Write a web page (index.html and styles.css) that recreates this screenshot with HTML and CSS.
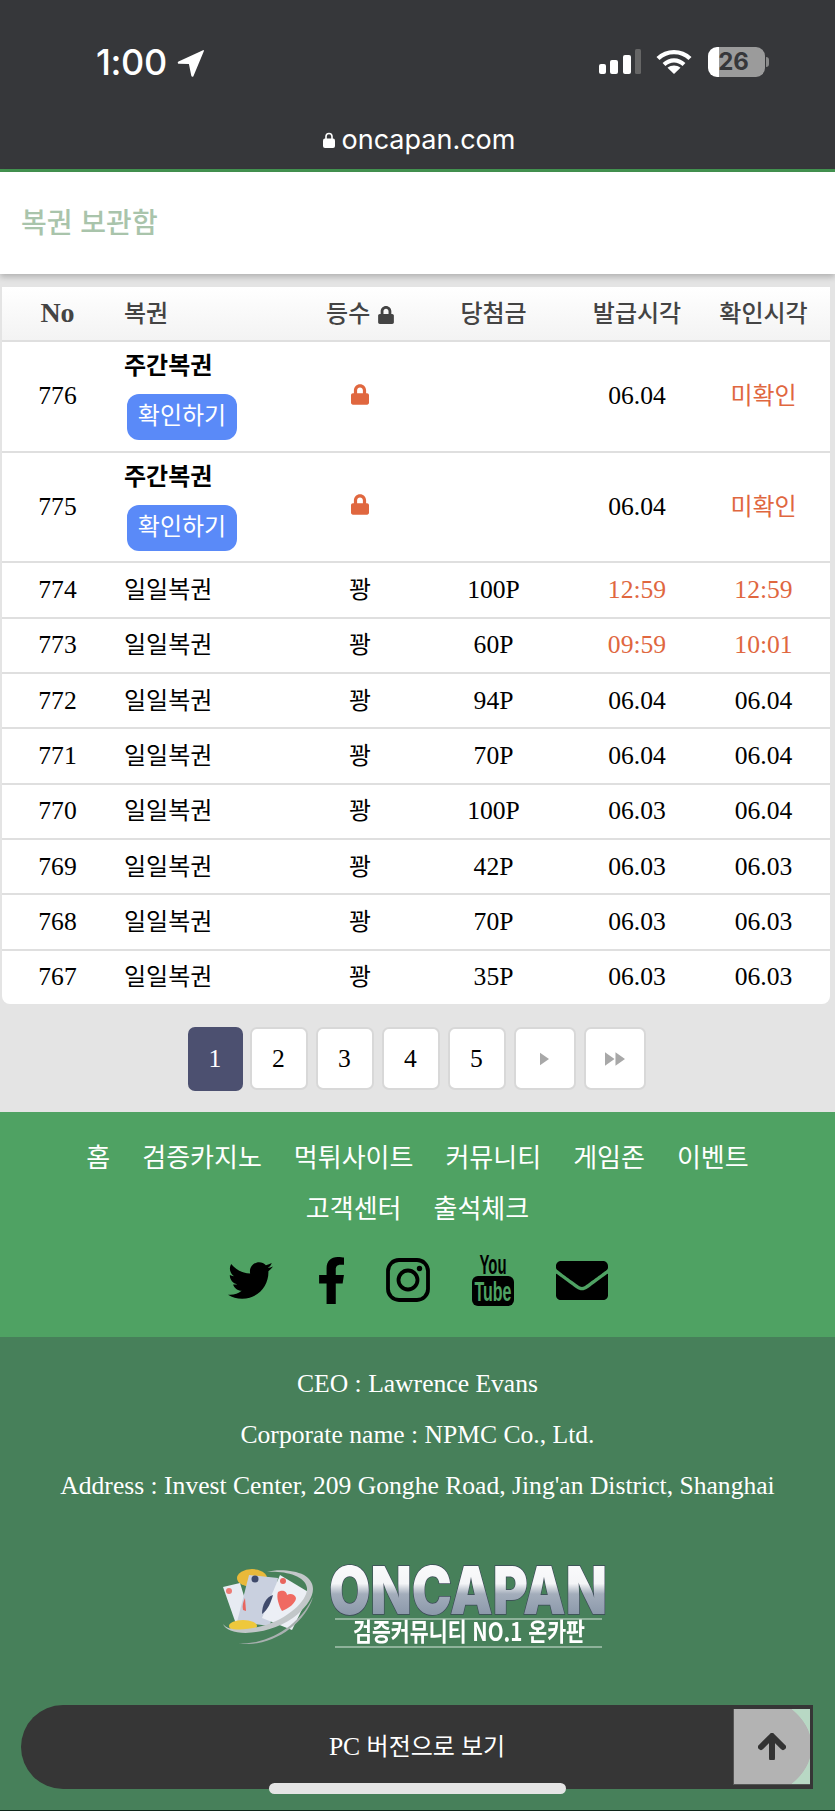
FILE: index.html
```html
<!DOCTYPE html>
<html lang="ko">
<head>
<meta charset="utf-8">
<title>복권 보관함</title>
<link rel="stylesheet" href="styles.css">
</head>
<body>
<div class="page">
  <header class="phone">
    <div class="status">
      <div class="clock"><span>1:00</span>
        <svg class="loc" viewBox="0 0 27 28"><path d="M26 1.200 1.500 12.600c-1.200.6-.9 2 .4 2.100l10 .4 2.400 11.600c.3 1.300 1.800 1.400 2.200.2L26.800 2.200c.3-.8-.2-1.300-.8-1z" fill="#fff"/></svg>
      </div>
      <div class="indicators">
        <svg class="signal" viewBox="0 0 42 26"><rect x="0" y="15" width="7" height="10" rx="2" fill="#fff"/><rect x="11" y="11" width="8" height="14" rx="2" fill="#fff"/><rect x="24" y="6" width="8" height="19" rx="2" fill="#fff"/><rect x="36" y="0" width="6" height="25" rx="1.500" fill="#666"/></svg>
        <svg class="wifi" viewBox="0 0 36 26" fill="none" stroke="#fff"><path d="M2 9.500C11 1 25 1 34 9.500" stroke-width="4.400"/><path d="M8 15.500c6-5.500 14-5.500 20 0" stroke-width="4.200"/><path d="M18 25l-6.500-6.200c3.800-3 9.200-3 13 0z" fill="#fff" stroke="none"/></svg>
        <div class="battery"><div class="battery-body"><span>26</span></div><i class="nub"></i></div>
      </div>
    </div>
    <div class="url">
      <svg class="url-lock" viewBox="0 0 12 16"><path d="M3 7V4.500a3 3 0 0 1 6 0V7" fill="none" stroke="#fff" stroke-width="1.600"/><rect x="0" y="6.500" width="12" height="9.500" rx="2" fill="#fff"/></svg>
      <span>oncapan.com</span>
    </div>
  </header>

  <div class="title-bar"><h1>복권 보관함</h1></div>

  <main class="content">
    <div class="card">
      <table class="tickets">
        <colgroup><col class="c-no"><col class="c-name"><col class="c-rank"><col class="c-prize"><col class="c-issue"><col class="c-check"></colgroup>
        <thead>
          <tr>
            <th class="no">No</th><th class="name">복권</th>
            <th>등수 <svg class="th-lock" viewBox="0 0 448 512"><path d="M400 224h-24v-72C376 68.200 307.800 0 224 0S72 68.200 72 152v72H48c-26.500 0-48 21.500-48 48v192c0 26.500 21.500 48 48 48h352c26.500 0 48-21.500 48-48V272c0-26.500-21.500-48-48-48zm-104 0H152v-72c0-39.700 32.300-72 72-72s72 32.300 72 72v72z"/></svg></th>
            <th>당첨금</th><th>발급시각</th><th>확인시각</th>
          </tr>
        </thead>
        <tbody>
          <tr class="tall"><td>776</td><td class="name ko"><strong>주간복권</strong><a class="check-btn">확인하기</a></td><td><svg class="lock" viewBox="0 0 448 512"><path d="M400 224h-24v-72C376 68.200 307.800 0 224 0S72 68.200 72 152v72H48c-26.500 0-48 21.500-48 48v192c0 26.500 21.500 48 48 48h352c26.500 0 48-21.500 48-48V272c0-26.500-21.500-48-48-48zm-104 0H152v-72c0-39.700 32.300-72 72-72s72 32.300 72 72v72z"/></svg></td><td></td><td>06.04</td><td class="alert ko">미확인</td></tr>
          <tr class="tall"><td>775</td><td class="name ko"><strong>주간복권</strong><a class="check-btn">확인하기</a></td><td><svg class="lock" viewBox="0 0 448 512"><path d="M400 224h-24v-72C376 68.200 307.800 0 224 0S72 68.200 72 152v72H48c-26.500 0-48 21.500-48 48v192c0 26.500 21.500 48 48 48h352c26.500 0 48-21.500 48-48V272c0-26.500-21.500-48-48-48zm-104 0H152v-72c0-39.700 32.300-72 72-72s72 32.300 72 72v72z"/></svg></td><td></td><td>06.04</td><td class="alert ko">미확인</td></tr>
          <tr><td>774</td><td class="name ko">일일복권</td><td class="ko">꽝</td><td>100P</td><td class="alert">12:59</td><td class="alert">12:59</td></tr>
          <tr><td>773</td><td class="name ko">일일복권</td><td class="ko">꽝</td><td>60P</td><td class="alert">09:59</td><td class="alert">10:01</td></tr>
          <tr><td>772</td><td class="name ko">일일복권</td><td class="ko">꽝</td><td>94P</td><td>06.04</td><td>06.04</td></tr>
          <tr><td>771</td><td class="name ko">일일복권</td><td class="ko">꽝</td><td>70P</td><td>06.04</td><td>06.04</td></tr>
          <tr><td>770</td><td class="name ko">일일복권</td><td class="ko">꽝</td><td>100P</td><td>06.03</td><td>06.04</td></tr>
          <tr><td>769</td><td class="name ko">일일복권</td><td class="ko">꽝</td><td>42P</td><td>06.03</td><td>06.03</td></tr>
          <tr><td>768</td><td class="name ko">일일복권</td><td class="ko">꽝</td><td>70P</td><td>06.03</td><td>06.03</td></tr>
          <tr><td>767</td><td class="name ko">일일복권</td><td class="ko">꽝</td><td>35P</td><td>06.03</td><td>06.03</td></tr>
        </tbody>
      </table>
    </div>
    <nav class="pager">
      <a class="pg active">1</a><a class="pg">2</a><a class="pg">3</a><a class="pg">4</a><a class="pg">5</a>
      <a class="pg wide"><svg class="tri" viewBox="0 0 10 14"><path d="M0 0l10 7-10 7z"/></svg></a>
      <a class="pg wide"><svg class="tri2" viewBox="0 0 21 14"><path d="M0 0l10 7-10 7zM11 0l10 7-10 7z"/></svg></a>
    </nav>
  </main>

  <section class="foot-nav">
    <nav class="menu">
      <a>홈</a><a>검증카지노</a><a>먹튀사이트</a><a>커뮤니티</a><a>게임존</a><a>이벤트</a><a>고객센터</a><a>출석체크</a>
    </nav>
    <div class="social">
      <svg class="s-tw" viewBox="0 0 512 416"><path transform="translate(0 -48)" d="M459.370 151.716c.325 4.548.325 9.097.325 13.645 0 138.720-105.583 298.558-298.558 298.558-59.452 0-114.680-17.219-161.137-47.106 8.447.974 16.568 1.299 25.340 1.299 49.055 0 94.213-16.568 130.274-44.832-46.132-.975-84.792-31.188-98.112-72.772 6.498.974 12.995 1.624 19.818 1.624 9.421 0 18.843-1.300 27.614-3.573-48.081-9.747-84.143-51.980-84.143-102.985v-1.299c13.969 7.797 30.214 12.670 47.431 13.319-28.264-18.843-46.781-51.005-46.781-87.391 0-19.492 5.197-37.360 14.294-52.954 51.655 63.675 129.300 105.258 216.365 109.807-1.624-7.797-2.599-15.918-2.599-24.040 0-57.828 46.782-104.934 104.934-104.934 30.213 0 57.502 12.670 76.670 33.137 23.715-4.548 46.456-13.320 66.599-25.340-7.798 24.366-24.366 44.833-46.132 57.827 21.117-2.273 41.584-8.122 60.426-16.243-14.292 20.791-32.161 39.308-52.628 54.253z"/></svg>
      <svg class="s-fb" viewBox="22 0 272 512"><path d="M279.140 288l14.220-92.660h-88.910v-60.130c0-25.350 12.420-50.060 52.240-50.060h40.420V6.260S260.430 0 225.360 0c-73.220 0-121.080 44.380-121.080 124.720v70.620H22.890V288h81.390v224h100.170V288z"/></svg>
      <svg class="s-ig" viewBox="0 0 44 44" fill="none" stroke="#000"><rect x="2" y="2" width="40" height="40" rx="11" stroke-width="3.800"/><circle cx="22" cy="22" r="9.500" stroke-width="3.800"/><circle cx="33.500" cy="10.500" r="2.700" fill="#000" stroke="none"/></svg>
      <svg class="s-yt" viewBox="0 0 42 52"><text class="yt-you" x="21" y="20" text-anchor="middle" textLength="27" lengthAdjust="spacingAndGlyphs">You</text><rect x="0" y="22" width="42" height="30" rx="6"/><text class="yt-tube" x="21" y="47" text-anchor="middle" textLength="37" lengthAdjust="spacingAndGlyphs">Tube</text></svg>
      <svg class="s-ml" viewBox="0 64 512 384"><path d="M502.300 190.800c3.900-3.100 9.700-.2 9.700 4.700V400c0 26.500-21.500 48-48 48H48c-26.500 0-48-21.500-48-48V195.600c0-5 5.700-7.800 9.700-4.700 22.400 17.400 52.100 39.500 154.100 113.600 21.100 15.400 56.700 47.800 92.200 47.600 35.700.3 72-32.800 92.300-47.600 102-74.100 131.600-96.300 154-113.700zM256 320c23.200.4 56.600-29.200 73.400-41.400 132.700-96.300 142.800-104.700 173.400-128.700 5.800-4.500 9.200-11.500 9.200-18.900v-19c0-26.500-21.500-48-48-48H48C21.500 64 0 85.500 0 112v19c0 7.400 3.400 14.300 9.200 18.900 30.600 23.900 40.700 32.400 173.400 128.700 16.800 12.200 50.200 41.800 73.400 41.400z"/></svg>
    </div>
  </section>

  <footer class="foot-info">
    <p>CEO : Lawrence Evans</p>
    <p>Corporate name : NPMC Co., Ltd.</p>
    <p>Address : Invest Center, 209 Gonghe Road, Jing'an District, Shanghai</p>
    <svg class="logo" viewBox="0 0 385 84">
      <defs>
        <linearGradient id="chrome" x1="0" y1="0" x2="0" y2="1"><stop offset="0" stop-color="#fff"/><stop offset=".42" stop-color="#f4f5f7"/><stop offset=".55" stop-color="#a3adbb"/><stop offset=".8" stop-color="#8c99ab"/><stop offset="1" stop-color="#c4cbd5"/></linearGradient>
      </defs>
      <ellipse cx="30" cy="14" rx="15" ry="9" fill="#e9b93a"/>
      <path d="M1 23 18 19 30 58 14 60z" fill="#e7ebf2"/>
      <path d="M27 11 56 14 48 62 15 58z" fill="#c9d0df"/>
      <path d="M58 11 88 29 70 66 40 54z" fill="#eceff5"/>
      <circle cx="7" cy="27" r="3" fill="#ec7b74"/><circle cx="33" cy="15" r="3.500" fill="#3f4a6b"/><circle cx="61" cy="17" r="3" fill="#e8655e"/>
      <path d="M40 50c6-4 9-12 11-19-7 2-11 10-11 19z" fill="#3f4a6b"/>
      <path d="M23 34c-2 4-3 8-2 12l3 1z" fill="#e8655e"/>
      <path d="M56 28c5-3 9 0 9 3 3-2 8-1 9 3 0 5-8 11-14 13-3-5-6-14-4-19z" fill="#f06a62"/>
      <ellipse cx="21" cy="62" rx="14" ry="6" fill="#eec83c"/>
      <path d="M1 60C6 74 50 72 76 50 92 36 97 20 82 11 72 6 55 5 45 8 62 7 83 11 85 24 86 36 66 55 40 62 22 67 6 67 1 60z" fill="#c2c7c9"/>
      <path d="M16 79c24 3 60-14 75-46-8 28-44 52-75 46z" fill="#a9b0b0"/>
      <text class="logo-word" x="107" y="50" textLength="278" lengthAdjust="spacingAndGlyphs" fill="url(#chrome)">ONCAPAN</text>
      <path d="M113 55H380M113 83H380" stroke="#d6e3da" stroke-width="1.200"/>
      <text class="logo-sub" x="247" y="77" text-anchor="middle" textLength="232" lengthAdjust="spacingAndGlyphs">검증커뮤니티 NO.1 온카판</text>
    </svg>
  </footer>

  <div class="pc-bar">
    <span class="pc-text">PC <span class="ko">버전으로 보기</span></span>
    <a class="to-top"><svg viewBox="0 0 28 27" fill="none" stroke="#333" stroke-width="6" stroke-linecap="round" stroke-linejoin="round"><path d="M14 25V4M3 14 14 3l11 11"/></svg></a>
  </div>
  <i class="home"></i>
</div>
</body>
</html>
```

FILE: styles.css
```css
* { box-sizing: border-box; }
html, body { margin: 0; padding: 0; }
body {
  width: 835px;
  font-family: "Liberation Serif", "Noto Sans CJK KR", serif;
  font-size: 25.600px;
  color: #000;
  background: #47805a;
}
.ko { font-size: 24px; }
.page { position: relative; width: 835px; height: 1811px; overflow: hidden; display: flex; flex-direction: column; }

.phone { height: 172px; background: #36373a; border-bottom: 3px solid #439350; flex: none; color: #fff; font-family: Inter, "Liberation Sans", sans-serif; }
.status { display: flex; justify-content: space-between; padding: 47px 66px 0 96px; height: 120px; }
.clock { display: flex; align-items: flex-start; gap: 10px; font-size: 36px; font-weight: 500; line-height: 30px; letter-spacing: -.4px; }
.loc { width: 27px; height: 28px; margin-top: 2px; }
.indicators { display: flex; align-items: flex-start; }
.signal { width: 42px; height: 26px; margin: 2px 15px 0 0; }
.wifi { width: 36px; height: 26px; margin: 2px 16px 0 0; }
.battery { display: flex; align-items: center; }
.battery-body { width: 57px; height: 30px; padding-right: 6px; border-radius: 9px; background: linear-gradient(90deg, #fff 0 20%, #9b9b9b 20%); color: #36373a; font: 700 24px/30px Inter, sans-serif; text-align: center; }
.nub { display: block; width: 3px; height: 10px; margin-left: 1px; background: #8a8a8a; border-radius: 0 3px 3px 0; }
.url { display: flex; justify-content: center; align-items: center; gap: 7px; padding-left: 3px; font-size: 27px; line-height: 40px; }
.url-lock { width: 12px; height: 16px; }

.title-bar { height: 102px; flex: none; background: #fff; display: flex; align-items: center; padding: 0 21px 4px; box-shadow: 0 3px 6px rgba(0,0,0,.22); position: relative; }
.title-bar h1 { margin: 0; font: 500 28px/1 "Noto Sans CJK KR", sans-serif; color: #a9c4ab; }

.content { height: 838px; flex: none; background: #e4e4e4; padding: 13px 2px 0; }
.card { width: 828px; height: 717px; background: #fff; border-radius: 0 0 8px 8px; overflow: hidden; }
.tickets { width: 828px; table-layout: fixed; border-collapse: separate; border-spacing: 0; }
.c-no { width: 111px; } .c-name { width: 197px; } .c-rank { width: 100px; } .c-prize { width: 167px; } .c-issue { width: 120px; } .c-check { width: 133px; }
.tickets th { height: 53px; padding: 0 0 4px; font: 500 24px/1 "Noto Sans CJK KR", sans-serif; color: #444; text-align: center; background: linear-gradient(#fff, #f3f3f3); }
.tickets th.no { padding-bottom: 2px; font: 700 28px/1 "Liberation Serif", serif; }
.tickets th.name, .tickets td.name { text-align: left; padding-left: 11px; }
.tickets td { height: 55.330px; padding: 0; border-top: 2px solid #dfdfdf; text-align: center; vertical-align: middle; line-height: 30px; }
.tickets tr.tall td { height: 110.670px; }
.tickets td.name strong { display: block; font-weight: 700; margin-top: -1px; }
.tickets td.alert { color: #e0673f; }
.check-btn { display: block; width: 110px; height: 46px; margin: 13px 0 0 3px; border-radius: 12px; background: #5a8af8; color: #fff; text-align: center; line-height: 44px; }
.th-lock { width: 16px; height: 18px; margin-left: 1px; fill: #444; vertical-align: -2px; }
.lock { display: block; width: 18px; height: 21px; margin: -4px auto 0; fill: #e0673f; }

.pager { display: flex; justify-content: center; gap: 8px; margin-top: 23px; padding-right: 2px; }
.pg { width: 58px; height: 63px; background: #fff; border: 2px solid #d8d8d8; border-radius: 7px; display: flex; align-items: center; justify-content: center; color: #000; }
.pg.active { width: 55px; height: 64px; margin-right: -1px; background: #4c5070; border: 0; color: #fff; }
.pg.wide { width: 62px; }
.tri { width: 9px; height: 14px; fill: #a8a8a8; }
.tri2 { width: 20px; height: 14px; fill: #a8a8a8; }

.foot-nav { height: 225px; flex: none; background: #4fa263; padding-top: 18px; }
.menu { display: flex; flex-wrap: wrap; justify-content: center; column-gap: 32px; padding: 0 60px; font: 400 26px/51px "Noto Sans CJK KR", sans-serif; color: #fff; }
.social { display: flex; justify-content: center; align-items: center; gap: 42px; margin-top: 22px; }
.s-tw { width: 45px; height: 37px; margin-right: 4px; }
.s-fb { width: 25px; height: 47px; }
.s-ig { width: 44px; height: 44px; }
.s-yt { width: 42px; height: 52px; }
.s-ml { width: 52px; height: 41px; }
.yt-you { font: 700 27px "Liberation Sans", sans-serif; }
.yt-tube { font: 700 27px "Liberation Sans", sans-serif; fill: #4fa263; }

.foot-info { flex: 1; background: #47805a; color: #fff; text-align: center; padding-top: 21px; }
.foot-info p { margin: 0; line-height: 51px; }
.logo { display: block; width: 385px; height: 84px; margin: 53px 0 0 222px; filter: blur(.5px); }
.logo-word { font: 900 66px Inter, "Liberation Sans", sans-serif; stroke: #3c4858; stroke-width: 1.500; paint-order: stroke; }
.logo-sub { font: 700 25px "Noto Sans CJK KR", sans-serif; fill: #fff; }

.pc-bar { position: absolute; left: 21px; top: 1705px; width: 792px; height: 84px; background: #363636; border-radius: 42px 0 0 42px; display: flex; align-items: center; justify-content: center; color: #fff; }
.pc-text { margin-bottom: 6px; }
.to-top { position: absolute; right: 3px; top: 4px; width: 77px; height: 76px; background: radial-gradient(ellipse 78px 56px at 0 50%, #b3b3b3 0 99%, #b8d8c4 100%); border-left: 1px solid #555; border-bottom: 1px solid #555; display: flex; align-items: center; justify-content: center; }
.to-top svg { width: 28px; height: 27px; }
.home { position: absolute; left: 269px; top: 1783px; width: 297px; height: 11px; border-radius: 6px; background: #e5e5e5; }
.page::after { content: ""; position: absolute; left: 0; right: 0; bottom: 0; height: 1px; background: #10261a; }
```
